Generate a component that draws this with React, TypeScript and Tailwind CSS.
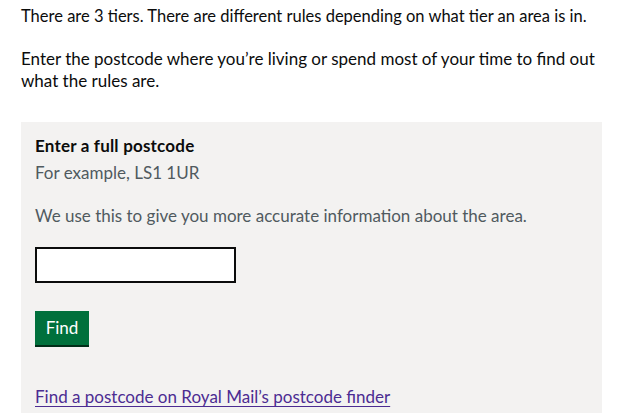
import React from "react";

export default function App() {
  return (
    <div
      className="h-[413px] overflow-hidden bg-white text-[#0b0c0c] px-[21px] pt-[5px]"
      style={{ fontFamily: "Lato, 'Liberation Sans', sans-serif" }}
    >
      <div className="w-[581px]">
        <p className="text-[16.5px] leading-[22px] mb-[21px]">
          There are 3 tiers. There are different rules depending on what tier an area is in.
        </p>
        <p className="text-[17px] leading-[22px] mb-[30px]">
          Enter the postcode where you’re living or spend most of your time to find out what the rules are.
        </p>
        <div className="bg-[#f3f2f1] px-[14px] pt-[13px] pb-[20px]">
          <div className="text-[17px] leading-[22px] font-bold tracking-[0.2px]">Enter a full postcode</div>
          <div className="text-[17px] leading-[22px] text-[#505a5f] mt-[5px]">For example, LS1 1UR</div>
          <div className="text-[17px] leading-[22px] text-[#505a5f] mt-[21px]">
            We use this to give you more accurate information about the area.
          </div>
          <input
            type="text"
            aria-label="Postcode"
            className="block mt-[20px] w-[201px] h-[36px] border-2 border-[#0b0c0c] bg-white outline-none"
          />
          <button className="block mt-[28px] w-[54px] text-center bg-[#00703c] text-white text-[17px] leading-[22px] pt-[6px] pb-[6px] shadow-[0_2px_0_#002d18]">
            Find
          </button>
          <a
            href="#"
            className="block mt-[41px] text-[17px] leading-[22px] text-[#4c2c92] underline underline-offset-[3px]"
          >
            Find a postcode on Royal Mail’s postcode finder
          </a>
        </div>
      </div>
    </div>
  );
}
